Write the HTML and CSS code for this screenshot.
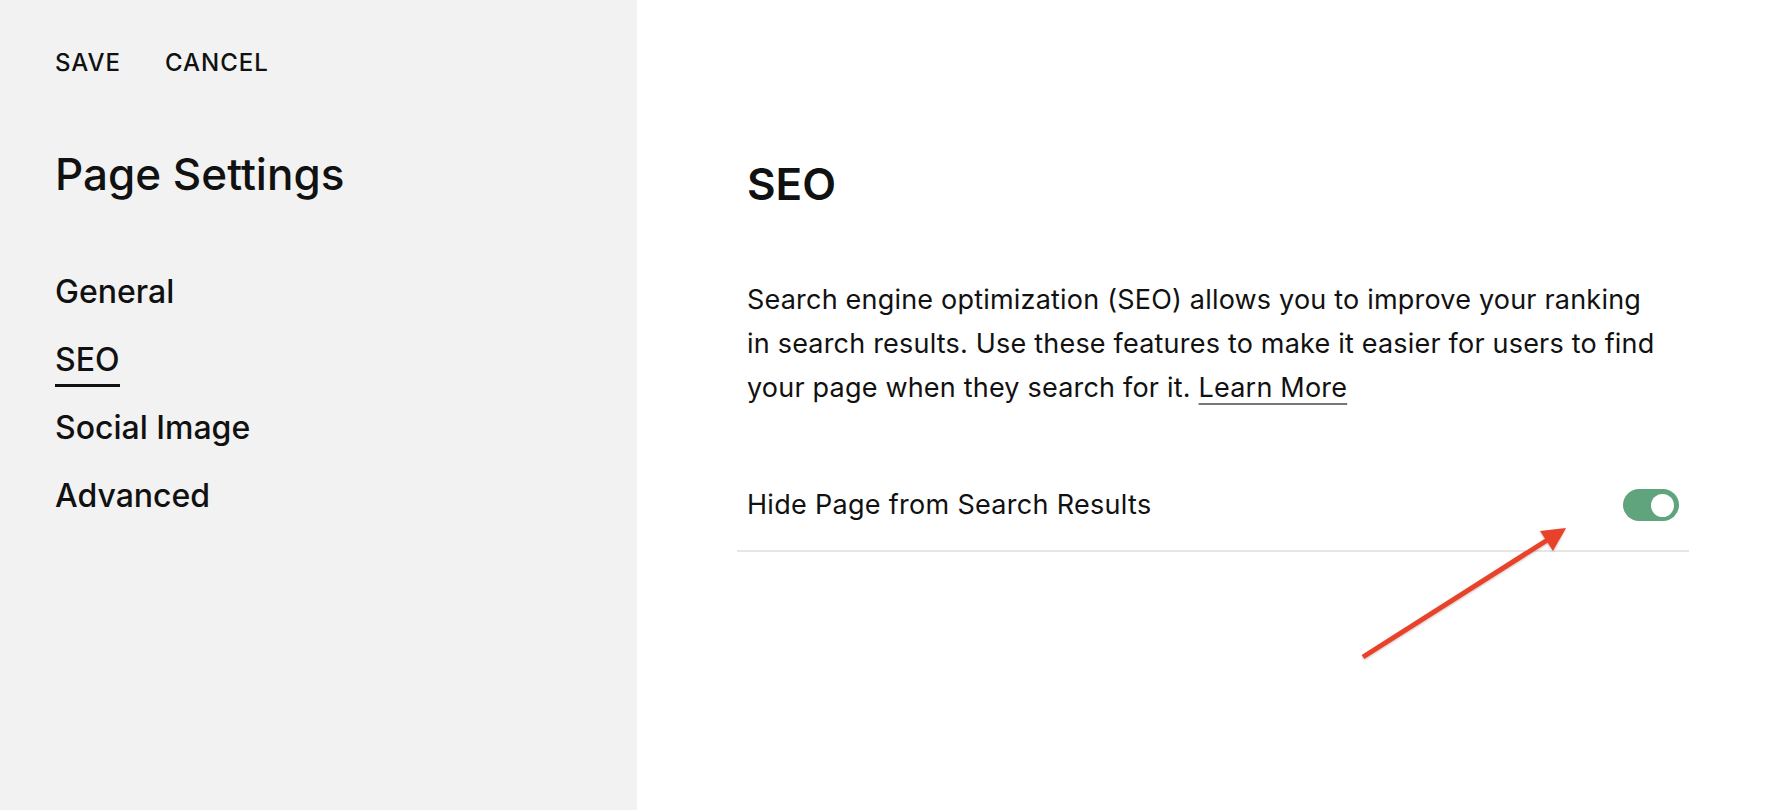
FILE: index.html
```html
<!DOCTYPE html>
<html lang="en">
<head>
<meta charset="utf-8">
<title>Page Settings</title>
<link rel="stylesheet" href="styles.css">
</head>
<body>
<div class="app">
  <aside class="sidebar">
    <div class="actions">
      <span class="action">SAVE</span>
      <span class="action">CANCEL</span>
    </div>
    <h1 class="side-title">Page Settings</h1>
    <nav class="nav">
      <div class="nav-item"><span class="nav-label">General</span></div>
      <div class="nav-item"><span class="nav-label active">SEO</span></div>
      <div class="nav-item"><span class="nav-label">Social Image</span></div>
      <div class="nav-item"><span class="nav-label">Advanced</span></div>
    </nav>
  </aside>
  <main class="main">
    <div class="content">
      <h2 class="title">SEO</h2>
      <p class="desc">Search engine optimization (SEO) allows you to improve your ranking in search results. Use these features to make it easier for users to find your page when they search for it. <a class="learn">Learn More</a></p>
      <div class="row">
        <span class="row-label">Hide Page from Search Results</span>
        <span class="toggle"><span class="knob"></span></span>
      </div>
    </div>
  </main>
</div>
<svg class="annotation" width="1774" height="810" viewBox="0 0 1774 810" xmlns="http://www.w3.org/2000/svg">
  <defs>
    <filter id="sh" x="-10%" y="-10%" width="120%" height="120%">
      <feDropShadow dx="0" dy="1" stdDeviation="1" flood-color="#000" flood-opacity="0.25"/>
    </filter>
  </defs>
  <g filter="url(#sh)">
    <line x1="1363" y1="657" x2="1549" y2="539" stroke="#e8432b" stroke-width="5"/>
    <polygon points="1566,528 1540,531 1553,551" fill="#e8432b"/>
  </g>
</svg>
</body>
</html>
```

FILE: styles.css
```css
html, body {
  margin: 0;
  padding: 0;
}
body {
  font-family: Inter, "Noto Sans", "Liberation Sans", sans-serif;
  color: #111111;
  background: #ffffff;
  width: 1774px;
  height: 810px;
  overflow: hidden;
  position: relative;
}
.app {
  display: flex;
  height: 810px;
}
.sidebar {
  width: 637px;
  flex: none;
  background: #f2f2f2;
  padding-left: 55px;
  box-sizing: border-box;
  display: flex;
  flex-direction: column;
}
.actions {
  display: flex;
  gap: 44px;
  margin-top: 51px;
}
.action {
  font-size: 24px;
  line-height: 24px;
  font-weight: 500;
  letter-spacing: 0.04em;
}
.side-title {
  margin: 77px 0 0 0;
  font-size: 44px;
  line-height: 44px;
  font-weight: 500;
}
.nav {
  margin-top: 80px;
  display: flex;
  flex-direction: column;
  gap: 25px;
}
.nav-item {
  font-size: 32px;
  line-height: 32px;
  font-weight: 500;
}
.nav-label {
  display: inline-block;
  padding-bottom: 8px;
  border-bottom: 3px solid transparent;
}
.nav-label.active {
  border-bottom-color: #111111;
}
.main {
  flex: 1;
  padding-left: 100px;
}
.content {
  width: 952px;
  display: flex;
  flex-direction: column;
}
.title {
  margin: 162px 0 0 0;
  padding-left: 10px;
  font-size: 44px;
  line-height: 44px;
  font-weight: 600;
}
.desc {
  margin: 72px 0 0 0;
  padding-left: 10px;
  width: 922px;
  font-size: 27px;
  line-height: 44px;
  font-weight: 400;
  letter-spacing: 0.2px;
}
.learn {
  text-decoration: underline;
  text-decoration-color: #777777;
  text-decoration-thickness: 2px;
  text-underline-offset: 6px;
  color: #111111;
}
.row {
  margin-top: 50px;
  padding: 29px 10px;
  display: flex;
  align-items: center;
  justify-content: space-between;
  border-bottom: 2px solid #e6e6e6;
}
.row-label {
  font-size: 27px;
  line-height: 32px;
  letter-spacing: 0.3px;
}
.toggle {
  width: 56px;
  height: 32px;
  border-radius: 16px;
  background: #60a47d;
  display: flex;
  align-items: center;
  justify-content: flex-end;
  padding-right: 5px;
  box-sizing: border-box;
}
.knob {
  width: 23px;
  height: 23px;
  border-radius: 50%;
  background: #ffffff;
}
.annotation {
  position: absolute;
  left: 0;
  top: 0;
  pointer-events: none;
}
```
